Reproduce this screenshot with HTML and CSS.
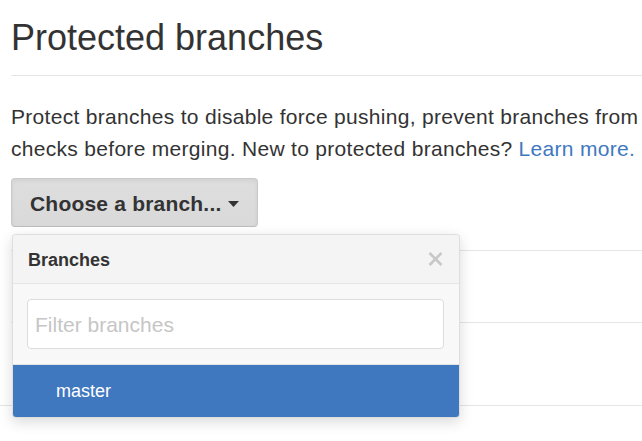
FILE: index.html
```html
<!DOCTYPE html>
<html lang="en">
<head>
<meta charset="utf-8">
<title>Protected branches</title>
<link rel="stylesheet" href="styles.css">
</head>
<body>
<div class="page">
  <div class="content">
    <h2 class="title">Protected branches</h2>
    <p class="lead">Protect branches to disable force pushing, prevent branches from being deleted, and optionally require status<br>checks before merging. New to protected branches? <a href="#" class="link">Learn more.</a></p>
    <div class="select-wrap">
      <button class="btn" type="button">Choose a branch... <svg class="caret" width="11" height="6" viewBox="0 0 11 6"><path d="M0 0 H11 L5.5 6 Z" fill="#333"/></svg></button>
      <div class="menu">
        <div class="menu-header">
          <span class="menu-title">Branches</span>
          <svg class="close" width="15" height="14" viewBox="0 0 15 14"><path d="M1.5 1 L13.5 13 M13.5 1 L1.5 13" stroke="#c8c8c8" stroke-width="2.6" stroke-linecap="butt"/></svg>
        </div>
        <div class="menu-filter">
          <input class="filter" type="text" placeholder="Filter branches">
        </div>
        <div class="menu-item">master</div>
      </div>
    </div>
  </div>
  <div class="rows">
    <div class="row row-a"></div>
    <div class="row row-b"></div>
    <div class="row row-c"></div>
  </div>
</div>
</body>
</html>
```
FILE: styles.css
```css
* { box-sizing: border-box; }
html, body { margin: 0; padding: 0; background: #fff; }
body {
  font-family: "Liberation Sans", Arial, Helvetica, sans-serif;
  color: #333;
  overflow: hidden;
}
.page { width: 642px; height: 441px; overflow: hidden; }
.content { padding: 16px 0 0 11px; }
.title {
  margin: 0;
  font-size: 36px;
  font-weight: normal;
  line-height: 43px;
  padding-bottom: 16px;
  border-bottom: 1px solid #e5e5e5;
  white-space: nowrap;
}
.lead {
  margin: 25px 0 0 0;
  font-size: 21px;
  letter-spacing: 0.3px;
  line-height: 31.5px;
  white-space: nowrap;
  height: 63px;
}
.link { color: #4078c0; text-decoration: none; }
.select-wrap { position: relative; margin-top: 14px; width: 247px; }
.btn {
  display: flex;
  align-items: center;
  gap: 7px;
  width: 247px;
  height: 49px;
  padding: 2px 18px 0 18px;
  font-family: "Liberation Sans", Arial, Helvetica, sans-serif;
  font-size: 21px;
  letter-spacing: 0.2px;
  font-weight: bold;
  color: #333;
  background: linear-gradient(#dedede, #d9d9d9);
  border: 1px solid #c9c9c9;
  border-bottom-color: #bdbdbd;
  border-radius: 4px;
  box-shadow: inset 0 2px 4px rgba(0,0,0,0.06);
  white-space: nowrap;
}
.caret { flex: none; }
.menu {
  position: absolute;
  top: 56px;
  left: 1px;
  width: 448px;
  background: #f8f8f8;
  border: 1px solid rgba(0,0,0,0.1);
  border-radius: 4px;
  box-shadow: 0 4px 14px rgba(0,0,0,0.15);
  overflow: hidden;
  z-index: 2;
}
.menu-header {
  display: flex;
  align-items: center;
  justify-content: space-between;
  padding: 13px 16px 11px 15px;
  background: #f4f4f4;
  border-bottom: 1px solid #e5e5e5;
}
.menu-title {
  font-size: 18px;
  font-weight: bold;
  line-height: 24px;
}
.close { flex: none; margin-top: -2px; }
.menu-filter {
  padding: 15px 15px 15px 14px;
  border-bottom: 1px solid #e3e3e3;
}
.filter {
  display: block;
  width: 100%;
  height: 50px;
  padding: 2px 7px 0 7px;
  font-family: "Liberation Sans", Arial, Helvetica, sans-serif;
  font-size: 21px;
  color: #333;
  background: #fff;
  border: 1px solid #ddd;
  border-radius: 4px;
  outline: none;
}
.filter::placeholder { color: #c6c6c6; }
.menu-item {
  height: 52px;
  padding: 1px 0 0 43px;
  font-size: 18px;
  line-height: 51px;
  color: #fff;
  background: #4078c0;
}
.rows { margin-top: 23px; }
.row { border-top: 1px solid #e5e5e5; }
.row-a { height: 72px; margin-left: 11px; }
.row-b { height: 83px; margin-left: 11px; }
.row-c { height: 40px; }
```
